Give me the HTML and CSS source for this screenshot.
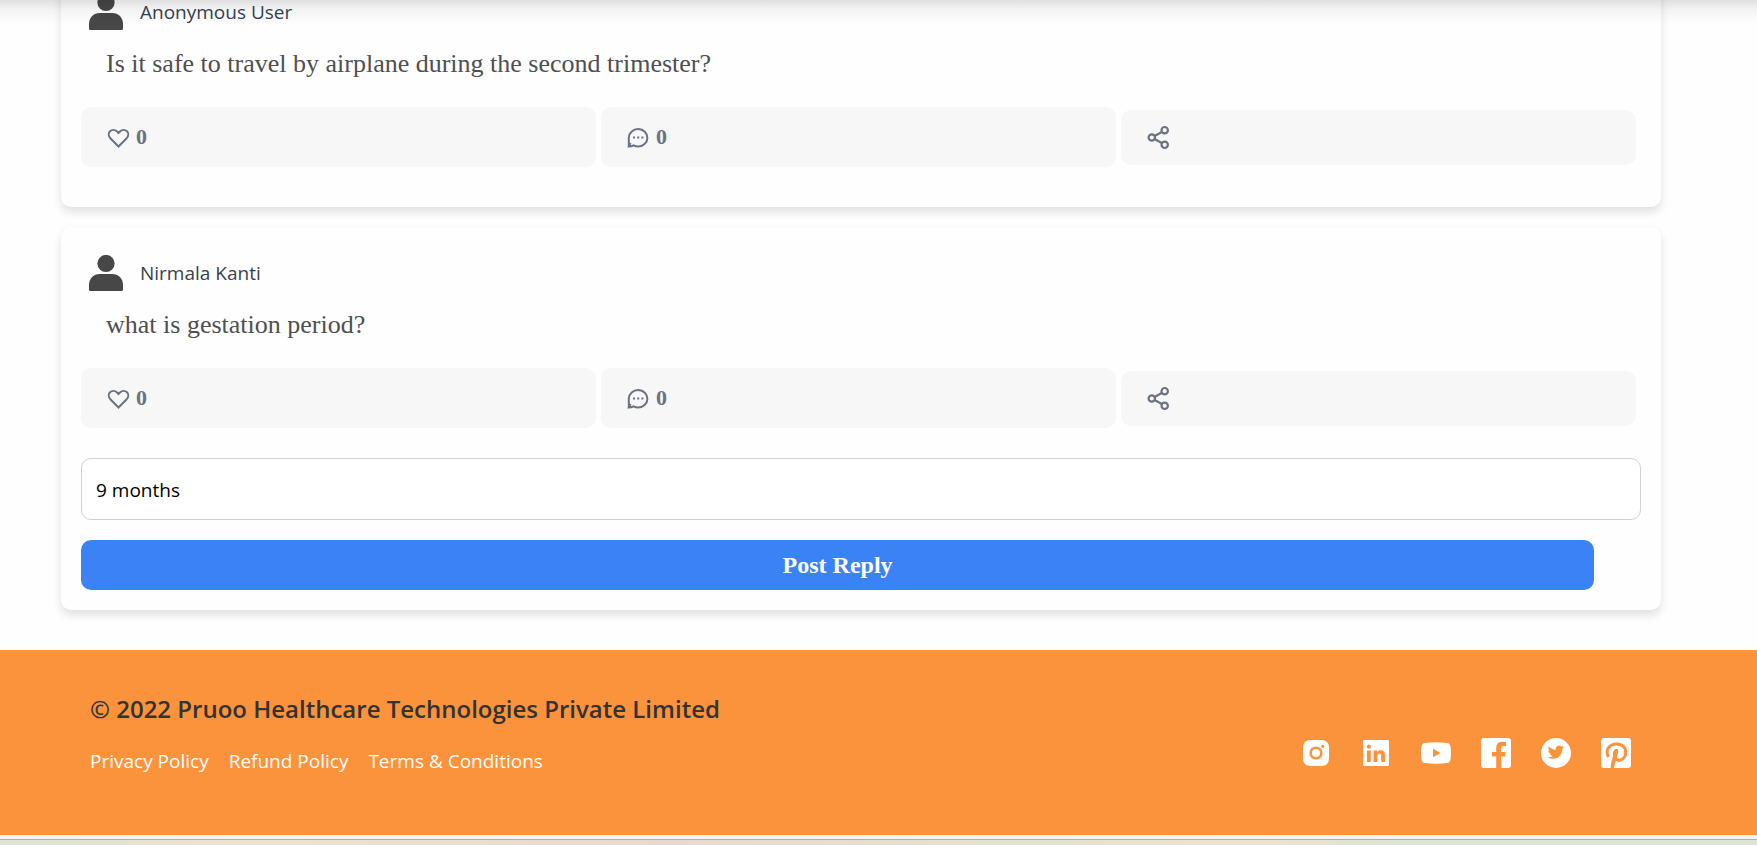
FILE: index.html
```html
<!DOCTYPE html>
<html lang="en">
<head>
<meta charset="utf-8">
<meta name="viewport" content="width=device-width, initial-scale=1">
<title>Pruoo Community</title>
<link rel="stylesheet" href="styles.css">
</head>
<body>
<svg class="sprite" aria-hidden="true">
  <symbol id="user" viewBox="0 0 34 36"><circle cx="17" cy="8.5" r="8.6"/><path d="M11 19H23C29.500 19 34 23.500 34 30V34.500Q34 36 32.500 36H1.500Q0 36 0 34.500V30C0 23.500 4.500 19 11 19Z"/></symbol>
  <symbol id="heart" viewBox="0 0 25 25"><path fill="none" stroke="currentColor" stroke-width="2" d="M12.500 21.500 4.300 13.200C2.300 11 2.300 8 4 6.300 6 4.400 8.900 4.500 10.800 6.300L12.500 8 14.200 6.300C16.100 4.500 19 4.400 21 6.300 22.700 8 22.700 11 20.700 13.200Z"/></symbol>
  <symbol id="comment" viewBox="0 0 25 25"><path fill="none" stroke="currentColor" stroke-width="2" d="M2.800 21.500V12.500A9.300 8.800 0 1 1 12 21.600C10.200 21.600 8.800 21 7.600 20.400 6.200 21.100 4.700 21.500 2.800 21.500L4.600 18"/><path d="M7 11.500h2v2h-2zM11.200 11.500h2v2h-2zM15.400 11.500h2v2h-2z"/></symbol>
  <symbol id="share" viewBox="0 0 25 25"><g fill="none" stroke="currentColor" stroke-width="2.200"><circle cx="5.800" cy="12.500" r="3.200"/><circle cx="18.700" cy="5.200" r="3.200"/><circle cx="18.700" cy="19.800" r="3.200"/><path d="M8.500 11 15.800 7M8.500 14 15.800 18"/></g></symbol>
</svg>

<main class="feed">
  <article class="card card-first">
    <header class="author"><svg class="avatar"><use href="#user"/></svg><span>Anonymous User</span></header>
    <p class="question">Is it safe to travel by airplane during the second trimester?</p>
    <div class="actions">
      <button class="action" type="button" aria-label="Like"><svg class="icon"><use href="#heart"/></svg><span>0</span></button>
      <button class="action" type="button" aria-label="Comment"><svg class="icon"><use href="#comment"/></svg><span>0</span></button>
      <button class="action action-share" type="button" aria-label="Share"><svg class="icon"><use href="#share"/></svg></button>
    </div>
  </article>
  <article class="card card-open">
    <header class="author"><svg class="avatar"><use href="#user"/></svg><span>Nirmala Kanti</span></header>
    <p class="question">what is gestation period?</p>
    <div class="actions">
      <button class="action" type="button" aria-label="Like"><svg class="icon"><use href="#heart"/></svg><span>0</span></button>
      <button class="action" type="button" aria-label="Comment"><svg class="icon"><use href="#comment"/></svg><span>0</span></button>
      <button class="action action-share" type="button" aria-label="Share"><svg class="icon"><use href="#share"/></svg></button>
    </div>
    <form class="reply">
      <input class="reply-input" type="text" aria-label="Reply" value="9 months">
      <button class="reply-button" type="button">Post Reply</button>
    </form>
  </article>
</main>

<footer class="footer">
  <div class="legal">
    <p class="copyright">© 2022 Pruoo Healthcare Technologies Private Limited</p>
    <nav class="links"><a href="#">Privacy Policy</a><a href="#">Refund Policy</a><a href="#">Terms &amp; Conditions</a></nav>
  </div>
  <nav class="social" aria-label="Social">
    <a href="#" aria-label="Instagram"><svg viewBox="0 0 30 30"><path fill-rule="evenodd" d="M10 2H20Q28 2 28 10V20Q28 28 20 28H10Q2 28 2 20V10Q2 2 10 2ZM15 8.400a6.600 6.600 0 1 0 0 13.200a6.600 6.600 0 1 0 0-13.200ZM15 10.900a4.100 4.100 0 1 1 0 8.200a4.100 4.100 0 1 1 0-8.200ZM21.700 6.700a1.600 1.600 0 1 0 0 3.200a1.600 1.600 0 1 0 0-3.200Z"/></svg></a>
    <a href="#" aria-label="LinkedIn"><svg viewBox="0 0 30 30"><path fill-rule="evenodd" d="M3.500 2H26.500Q28 2 28 3.500V26.500Q28 28 26.500 28H3.500Q2 28 2 26.500V3.500Q2 2 3.500 2ZM7.900 6.600a2.100 2.100 0 1 0 0 4.200a2.100 2.100 0 1 0 0-4.200ZM6 12.500V24H9.800V12.500ZM12.500 12.500V24H16.300V18C16.300 14.500 20.200 14.500 20.200 18V24H24V17C24 11.500 18.200 11.200 16.200 14.200V12.500Z"/></svg></a>
    <a href="#" aria-label="YouTube"><svg viewBox="0 0 30 30"><path fill-rule="evenodd" d="M4 4.900Q15 3.800 26 4.900Q29 5.200 29.500 8.500Q30.400 15 29.500 21.500Q29 24.800 26 25.100Q15 26.200 4 25.100Q1 24.800 .5 21.500Q-.4 15 .5 8.500Q1 5.200 4 4.900ZM12 10.700V19.300L19.500 15Z"/></svg></a>
    <a href="#" aria-label="Facebook"><svg viewBox="0 0 30 30"><path d="M3 0H27Q30 0 30 3V27Q30 30 27 30H20.100V18.600H24L24.700 13.900H20.100V10.500Q20.100 8.100 22.600 8.100H25V4Q23.200 3.700 21 3.700Q15.200 3.700 15.200 10V13.900H11V18.600H15.200V30H3Q0 30 0 27V3Q0 0 3 0Z"/></svg></a>
    <a href="#" aria-label="Twitter"><svg viewBox="0 0 30 30"><circle cx="15" cy="15" r="15"/><path class="cutout" transform="translate(6.700 6) scale(.68)" d="M23.950 4.570a10 10 0 0 1-2.820.77 4.960 4.960 0 0 0 2.160-2.720c-.95.550-2 .95-3.130 1.180a4.920 4.920 0 0 0-8.380 4.480C7.690 8.100 4.070 6.130 1.640 3.160a4.820 4.820 0 0 0-.67 2.470c0 1.710.87 3.210 2.190 4.100a4.900 4.900 0 0 1-2.230-.62v.06a4.920 4.920 0 0 0 3.950 4.830 5 5 0 0 1-2.210.080 4.940 4.940 0 0 0 4.600 3.420A9.870 9.870 0 0 1 0 19.540a13.990 13.990 0 0 0 7.550 2.210c9.050 0 14-7.500 14-13.980 0-.21 0-.42-.02-.63a9.940 9.940 0 0 0 2.460-2.550Z"/></svg></a>
    <a href="#" aria-label="Pinterest"><svg viewBox="0 0 30 30"><rect width="30" height="30" rx="3"/><path class="pin" d="M7.500 19C3.800 12.500 8 6 15.500 6C21.500 6 25.500 10 24.700 15.500C24 20.500 20.500 22.800 17.400 22.300C15.500 22 14.500 21 14 19.800"/><path class="cutout" d="M16.500 11C18.500 12.500 16 17.500 14.300 24.500L12.800 30H9.700C9.600 27 10.300 24.500 12.100 17.500C11.600 15 12.500 11 15 11Z"/></svg></a>
  </nav>
</footer>
<div class="bottom-strip"></div>
<div class="top-shadow"></div>
</body>
</html>
```
FILE: styles.css
```css
* { box-sizing: border-box; }

body {
  margin: 0;
  min-height: 100vh;
  overflow: hidden;
  background: #fefefe;
  font-family: "Segoe UI", "Open Sans", sans-serif;
  font-size: 19px;
  line-height: 30px;
}

button, input { font: inherit; margin: 0; }
p { margin: 0; }
a { color: inherit; text-decoration: none; }
svg { display: block; fill: currentColor; }
.sprite { display: none; }

.feed {
  display: flex;
  flex-direction: column;
  gap: 20px;
  padding: 0 96px 40px 61px;
}

.card {
  padding: 20px;
  border-radius: 10px;
  background: #fefefe;
  box-shadow: 0 5px 10px rgba(0, 0, 0, 0.12);
}

.card-first {
  margin-top: -34px;
  padding-bottom: 40px;
}

.author {
  display: flex;
  align-items: center;
  gap: 17px;
  height: 52px;
  padding-left: 8px;
  color: #374151;
}

.avatar {
  width: 34px;
  height: 36px;
  color: #474747;
}

.question {
  padding: 6px 25px 23px;
  color: #4f4f4f;
  font-family: Georgia, "Liberation Serif", serif;
  font-size: 26px;
  line-height: 40px;
}

.actions {
  display: grid;
  grid-template-columns: repeat(3, 1fr);
  align-items: center;
  gap: 5px;
  padding-right: 5px;
}

.action {
  display: flex;
  align-items: center;
  gap: 5px;
  height: 60px;
  padding: 0 25px;
  border: 0;
  border-radius: 10px;
  background: #f7f7f7;
  color: #6b7280;
  font-family: Georgia, "Liberation Serif", serif;
  font-size: 22px;
  font-weight: 700;
}

.action-share { height: 55px; }

.icon {
  width: 25px;
  height: 25px;
}

.reply {
  display: flex;
  flex-direction: column;
  align-items: flex-start;
  gap: 20px;
  padding-top: 30px;
}

.reply-input {
  width: 100%;
  height: 62px;
  padding: 2px 14px 0;
  border: 1px solid #d1d1d9;
  border-radius: 10px;
  background: #fff;
  color: #000;
}

.reply-button {
  width: 97%;
  height: 50px;
  border: 0;
  border-radius: 10px;
  background: #3b82f6;
  color: #fff;
  font-family: Georgia, "Liberation Serif", serif;
  font-size: 24px;
  font-weight: 700;
}

.footer {
  display: flex;
  justify-content: space-between;
  align-items: flex-start;
  padding: 40px 126px 59px 90px;
  background: #fb923c;
  color: #fff;
}

.copyright {
  margin-bottom: 19px;
  color: #333;
  font-size: 24px;
  font-weight: 600;
  line-height: 37px;
}

.links {
  display: flex;
  gap: 20px;
}

.social {
  display: flex;
  gap: 30px;
  padding-top: 48px;
}

.social svg {
  width: 30px;
  height: 30px;
}

.cutout { fill: #fb923c; }

.pin {
  fill: none;
  stroke: #fb923c;
  stroke-width: 3;
}

.bottom-strip {
  height: 20px;
  border-top: 4px solid #f4f4f4;
  background: linear-gradient(90deg, #dfe2d4, #ece3cd 15%, #e8d9d0 38%, #e3e3cd 58%, #ece3cd 71%, #dfe3d6 80%);
  box-shadow: inset 0 1px #aeb0a8;
}

.top-shadow {
  position: absolute;
  inset: 0 0 auto;
  height: 25px;
  background: linear-gradient(rgba(0, 0, 0, 0.12), rgba(0, 0, 0, 0.04) 40%, transparent);
  pointer-events: none;
}
```
